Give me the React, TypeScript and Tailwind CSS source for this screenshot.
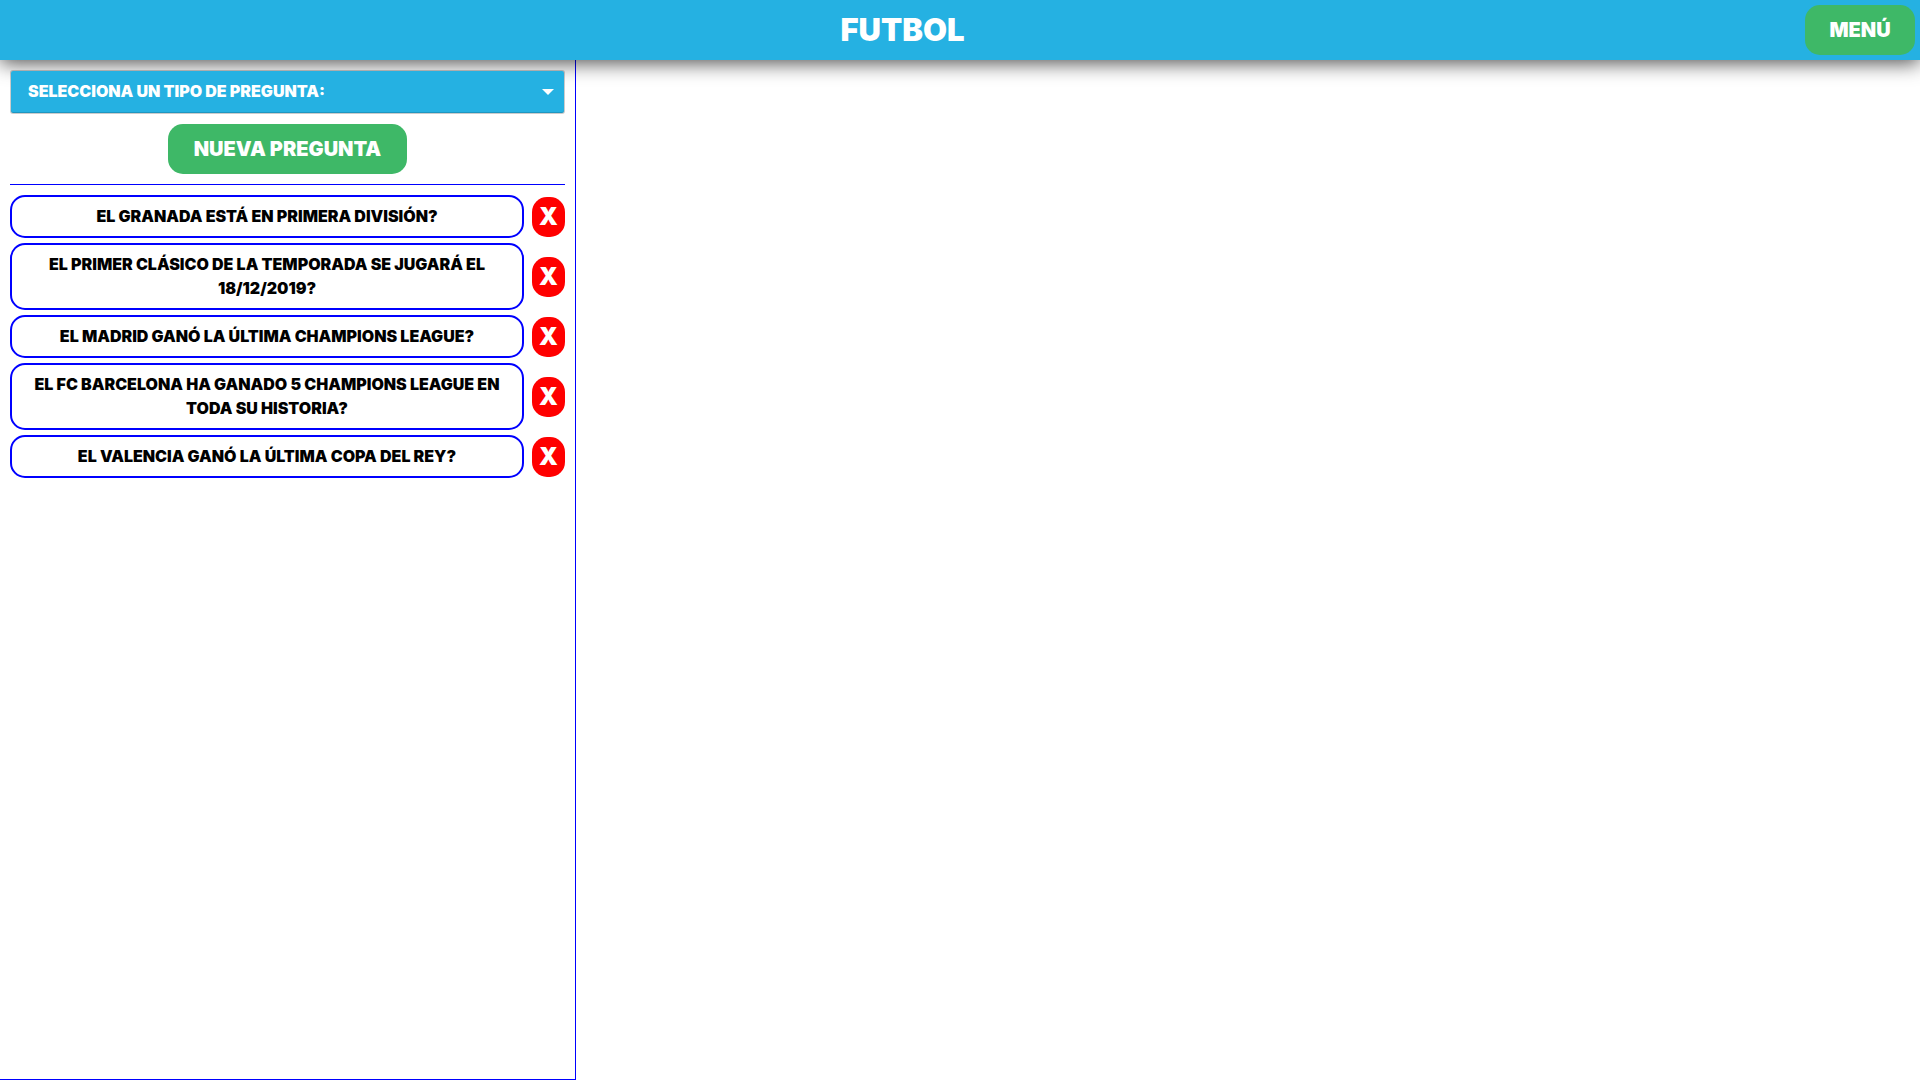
const questions = [
  "El Granada está en primera división?",
  "El primer clásico de la temporada se jugará el 18/12/2019?",
  "El Madrid ganó la última Champions League?",
  "El FC Barcelona ha ganado 5 Champions League en toda su historia?",
  "El Valencia ganó la última Copa del Rey?",
];

export default function App() {
  return (
    <div className="flex min-h-screen flex-col bg-white font-['Inter',sans-serif] font-black uppercase text-black">
      <header className="relative z-10 flex h-[60px] items-center bg-[#25b1e2] pr-[5px] text-white shadow-[0_3px_20px_rgba(0,0,0,0.7)]">
        <h1 className="flex-1 text-center text-[31px] leading-[60px]">Futbol</h1>
        <button type="button" className="h-[50px] w-[110px] rounded-[15px] bg-[#3eb867] text-[20px] uppercase">
          Menú
        </button>
      </header>
      <div className="flex flex-1">
        <aside className="w-[30%] border-r border-b border-[#0000ff] p-[10px]">
          <div className="relative z-20">
            <select
              aria-label="Tipo de pregunta"
              defaultValue=""
              className="block h-[44px] w-full appearance-none rounded-[3px] border border-black/20 bg-[#25b1e2] bg-clip-padding pr-10 pb-[2px] pl-[17px] text-[16px] uppercase text-white shadow-[inset_0_-1px_0_rgba(0,0,0,0.15)]"
            >
              <option value="">Selecciona un tipo de pregunta:</option>
              <option value="vf">Verdadero o falso</option>
            </select>
            <svg viewBox="0 0 12 6" className="pointer-events-none absolute top-[19px] right-[11px] h-[6px] w-[12px]" aria-hidden="true">
              <path d="M0 0h12L6 6z" fill="#fff" />
            </svg>
          </div>
          <div className="flex justify-center border-b border-[#0000ff] py-[10px]">
            <button type="button" className="h-[50px] w-[239px] rounded-[15px] bg-[#3eb867] text-[20px] uppercase text-white">
              Nueva pregunta
            </button>
          </div>
          <ul className="mt-[10px] flex flex-col gap-[5px]">
            {questions.map((question) => (
              <li key={question} className="flex items-center gap-2">
                <button
                  type="button"
                  className="flex-1 rounded-[15px] border-2 border-[#0000ff] px-[15px] pt-[7px] pb-[8px] text-center text-[16px] leading-[24px] uppercase"
                >
                  {question}
                </button>
                <button
                  type="button"
                  aria-label={"Eliminar: " + question}
                  className="h-[40px] w-[33px] rounded-[15px] bg-[#ff0000] text-[24px] text-white"
                >
                  X
                </button>
              </li>
            ))}
          </ul>
        </aside>
        <main className="flex-1" />
      </div>
    </div>
  );
}
